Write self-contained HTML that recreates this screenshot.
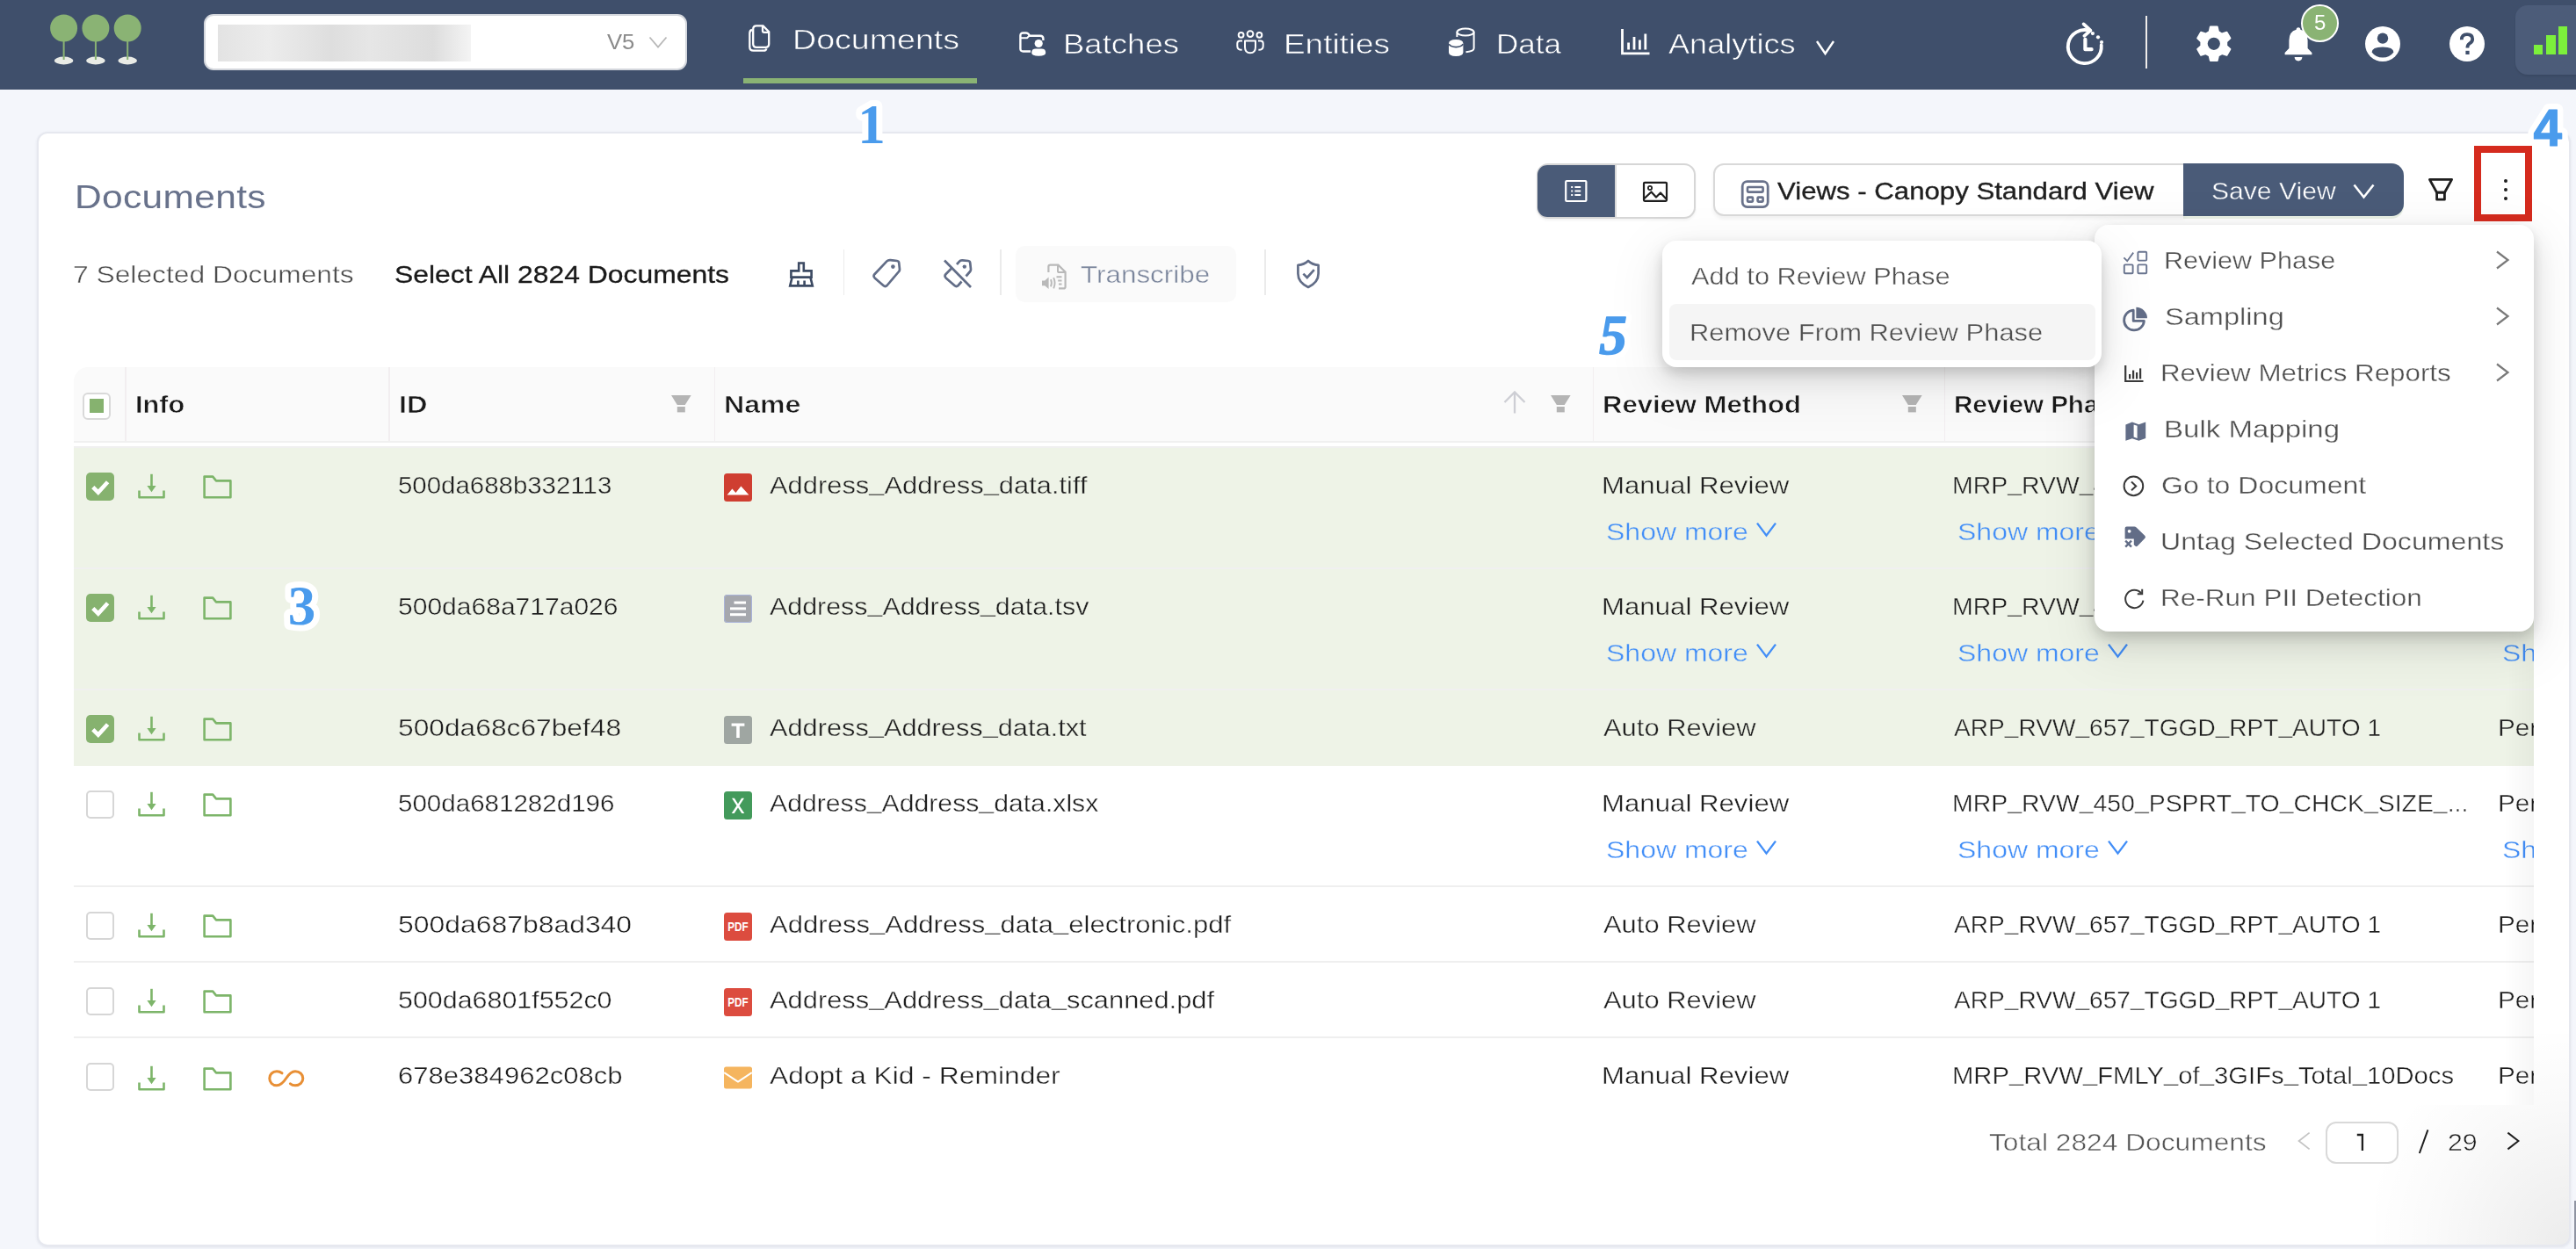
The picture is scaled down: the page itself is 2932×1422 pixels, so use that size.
<!DOCTYPE html>
<html><head><meta charset="utf-8"><title>Documents</title>
<style>
html,body{margin:0;padding:0;}
body{width:2932px;height:1422px;overflow:hidden;background:#f4f6fb;position:relative;font-family:"Liberation Sans",sans-serif;}
div,span,svg{position:absolute;}
span{white-space:nowrap;transform-origin:0 50%;will-change:transform;}
svg{overflow:visible;}
i{font-style:normal;position:relative;top:-0.152em;}
</style></head><body>
<div style="left:0px;top:0px;width:2932px;height:102px;background:#3f4f6b;"></div>
<svg style="left:0px;top:0px" width="200" height="102" viewBox="0 0 200 102"><ellipse cx="72.6" cy="69" rx="10.8" ry="4.4" fill="#e9ebe6"/><rect x="71.6" y="40" width="2" height="28" fill="#8ab374"/><circle cx="72.6" cy="32" r="15.5" fill="#8ab374"/><ellipse cx="108.9" cy="69" rx="10.8" ry="4.4" fill="#e9ebe6"/><rect x="107.9" y="40" width="2" height="28" fill="#8ab374"/><circle cx="108.9" cy="32" r="15.5" fill="#8ab374"/><ellipse cx="145.2" cy="69" rx="10.8" ry="4.4" fill="#e9ebe6"/><rect x="144.2" y="40" width="2" height="28" fill="#8ab374"/><circle cx="145.2" cy="32" r="15.5" fill="#8ab374"/></svg>
<div style="left:232px;top:16px;width:550px;height:64px;background:#fff;border:2px solid #d4d7dd;border-radius:11px;box-sizing:border-box;"></div>
<div style="left:248px;top:28px;width:288px;height:42px;background:linear-gradient(90deg,#e3e3e3 0%,#ececec 20%,#dedede 45%,#e6e6e6 60%,#dddddd 85%,#f4f4f4 100%);"></div>
<span style="left:691.00px;top:32.78px;font-size:24px;line-height:30px;color:#8a8a8a;transform:scaleX(1.0687);">V5</span>
<svg style="left:737px;top:40px;" width="24" height="16" viewBox="0 0 24 16"><path d="M2.5 2.5 L12 13.5 L21.5 2.5" fill="none" stroke="#b8b8b8" stroke-width="1.8"/></svg>
<svg style="left:852px;top:28px" width="26" height="32" viewBox="0 0 26 32"><path d="M4 6 Q1.3 6.5 1.3 10 V25.5 Q1.3 29.7 5.5 29.7 H17 Q20 29.7 20.3 27.3" fill="none" stroke="#fff" stroke-width="2.3"/><path d="M9 1.4 H16.5 L23.2 8.2 V22 Q23.2 25.8 19.4 25.8 H9 Q5.2 25.8 5.2 22 V5.2 Q5.2 1.4 9 1.4 Z" fill="none" stroke="#fff" stroke-width="2.3"/><path d="M16 1.8 V7 Q16 8.8 17.8 8.8 H23" fill="none" stroke="#fff" stroke-width="2.3"/></svg>
<span style="left:902.38px;top:25.07px;font-size:32px;line-height:40px;color:#fff;transform:scaleX(1.1744);-webkit-text-stroke:0.55px #3f4f6b;">Documents</span>
<div style="left:846px;top:89px;width:266px;height:6px;background:#8ab374;"></div>
<svg style="left:1160px;top:36px" width="32" height="30" viewBox="0 0 32 30"><path d="M13 22.5 H4.5 Q1.4 22.5 1.4 19.4 V4.6 Q1.4 1.5 4.5 1.5 H8 Q9.6 1.5 10.6 2.8 L12 4.7 H24 Q27.4 4.7 27.4 8 V10" fill="none" stroke="#fff" stroke-width="2.4"/><path d="M1.8 7.2 H9 L11.5 4.8" fill="none" stroke="#fff" stroke-width="2"/><circle cx="22.2" cy="13.5" r="4.6" fill="#fff"/><path d="M14.2 24 Q14.2 19.6 19 19.6 H25.4 Q30.2 19.6 30.2 24 Q30.2 27.8 22.2 27.8 Q14.2 27.8 14.2 24 Z" fill="#fff"/></svg>
<span style="left:1210.44px;top:30.37px;font-size:32px;line-height:40px;color:#fff;transform:scaleX(1.1414);-webkit-text-stroke:0.55px #3f4f6b;">Batches</span>
<svg style="left:1407px;top:34px" width="32" height="28" viewBox="0 0 32 28"><circle cx="5.6" cy="5.8" r="2.9" fill="none" stroke="#fff" stroke-width="2"/><circle cx="16" cy="4.6" r="3.4" fill="none" stroke="#fff" stroke-width="2"/><circle cx="26.4" cy="5.8" r="2.9" fill="none" stroke="#fff" stroke-width="2"/><path d="M10 12.4 H22 V19.5 Q22 26.3 16 26.3 Q10 26.3 10 19.5 Z" fill="none" stroke="#fff" stroke-width="2" stroke-linejoin="round"/><path d="M7 12.4 H4.4 Q1.3 12.4 1.3 15.6 V18.4 Q1.3 22.8 6.6 22.8" fill="none" stroke="#fff" stroke-width="2"/><path d="M25 12.4 H27.6 Q30.7 12.4 30.7 15.6 V18.4 Q30.7 22.8 25.4 22.8" fill="none" stroke="#fff" stroke-width="2"/></svg>
<span style="left:1461.42px;top:30.37px;font-size:32px;line-height:40px;color:#fff;transform:scaleX(1.1532);-webkit-text-stroke:0.55px #3f4f6b;">Entities</span>
<svg style="left:1648px;top:31px" width="32" height="34" viewBox="0 0 32 34"><ellipse cx="20" cy="5.6" rx="9.6" ry="4" fill="none" stroke="#fff" stroke-width="2"/><path d="M29.6 5.6 V24 Q29.6 27.4 20.5 28.2" fill="none" stroke="#fff" stroke-width="2"/><path d="M10.4 5.6 V11" fill="none" stroke="#fff" stroke-width="2"/><path d="M1 18.5 Q1 14 9.2 14 Q17.4 14 17.4 18.5 V28.6 Q17.4 33 9.2 33 Q1 33 1 28.6 Z" fill="#fff"/><path d="M1.2 19.2 Q3 22.6 9.2 22.6 Q15.4 22.6 17.2 19.2" fill="none" stroke="#3f4f6b" stroke-width="1.6"/></svg>
<span style="left:1702.53px;top:30.37px;font-size:32px;line-height:40px;color:#fff;transform:scaleX(1.0950);-webkit-text-stroke:0.55px #3f4f6b;">Data</span>
<svg style="left:1845px;top:33px" width="33" height="30" viewBox="0 0 33 30"><path d="M1.5 0 V27.8 H32.5" fill="none" stroke="#fff" stroke-width="2.8"/><rect x="7.2" y="15.5" width="2.8" height="8" fill="#fff"/><rect x="13.6" y="9" width="2.8" height="14.5" fill="#fff"/><rect x="20" y="12.5" width="2.8" height="11" fill="#fff"/><rect x="26.4" y="5.5" width="2.8" height="18" fill="#fff"/></svg>
<span style="left:1898.72px;top:30.37px;font-size:32px;line-height:40px;color:#fff;transform:scaleX(1.1299);-webkit-text-stroke:0.55px #3f4f6b;">Analytics</span>
<svg style="left:2064px;top:43px;" width="28" height="22" viewBox="0 0 28 22"><path d="M4 4 L13.5 18 L23 4" fill="none" stroke="#fff" stroke-width="2.4"/></svg>
<svg style="left:2350px;top:23px" width="48" height="54" viewBox="0 0 48 54"><path d="M28.99 12.14 A19 19 0 1 0 41.73 28.44" fill="none" stroke="#fff" stroke-width="3.8" stroke-linecap="round"/><path d="M21.6 4.4 L29.4 11.6 L22.4 17.8" fill="none" stroke="#fff" stroke-width="3.8" stroke-linecap="round" stroke-linejoin="round"/><circle cx="31.9" cy="15.1" r="2.1" fill="#fff"/><circle cx="38" cy="19.3" r="2.1" fill="#fff"/><circle cx="42" cy="25" r="2.1" fill="#fff"/><path d="M23.4 21.8 V33.2 H30.6" fill="none" stroke="#fff" stroke-width="4.2" stroke-linecap="round" stroke-linejoin="round"/></svg>
<div style="left:2441.8px;top:18px;width:2.1px;height:60px;background:#efecea;"></div>
<svg style="left:2498px;top:28.1px" width="44" height="44" viewBox="0 0 44 44"><path d="M16.66 8.14 L17.91 2.59 L25.69 2.59 L26.94 8.14 L31.06 10.51 L36.49 8.82 L40.38 15.57 L36.21 19.42 L36.21 24.18 L40.38 28.03 L36.49 34.78 L31.06 33.09 L26.94 35.46 L25.69 41.01 L17.91 41.01 L16.66 35.46 L12.54 33.09 L7.11 34.78 L3.22 28.03 L7.39 24.18 L7.39 19.42 L3.22 15.57 L7.11 8.82 L12.54 10.51Z" fill="#fff" stroke="#fff" stroke-width="2" stroke-linejoin="round"/><circle cx="21.8" cy="21.8" r="14.4" fill="#fff"/><circle cx="21.8" cy="21.8" r="7.1" fill="#3f4f6b"/></svg>
<svg style="left:2598px;top:30px" width="36" height="42" viewBox="0 0 36 42"><path d="M18 1.2 Q20.4 1.2 20.4 3.8 Q28.6 6 28.6 16 V25 L33.4 30 V32.2 H2.6 V30 L7.4 25 V16 Q7.4 6 15.6 3.8 Q15.6 1.2 18 1.2 Z" fill="#fff"/><path d="M13.6 35 H22.4 Q22 39.4 18 39.4 Q14 39.4 13.6 35 Z" fill="#fff"/></svg>
<div style="left:2618.5px;top:4.5px;width:43px;height:43px;background:#8ab374;border:2px solid #fff;border-radius:50%;box-sizing:border-box;"></div>
<span style="left:2634.00px;top:11.28px;font-size:24px;line-height:30px;color:#fff;">5</span>
<svg style="left:2692px;top:29.5px" width="40" height="40" viewBox="0 0 40 40"><circle cx="20" cy="20" r="20" fill="#fff"/><circle cx="20" cy="13.6" r="6.2" fill="#3f4f6b"/><path d="M7.6 29.4 Q7.6 23.4 20 23.4 Q32.4 23.4 32.4 29.4 Q28 35.4 20 35.4 Q12 35.4 7.6 29.4 Z" fill="#3f4f6b"/></svg>
<svg style="left:2787.5px;top:29.5px" width="40" height="40" viewBox="0 0 40 40"><circle cx="20" cy="20" r="20" fill="#fff"/><path d="M13.8 15.2 Q13.8 9.2 20 9.2 Q26.2 9.2 26.2 14.6 Q26.2 17.6 23 19.4 Q20.4 20.8 20.4 24.4" fill="none" stroke="#3f4f6b" stroke-width="3.8"/><rect x="18.4" y="27.8" width="4.2" height="4.2" fill="#3f4f6b"/></svg>
<div style="left:2863px;top:6px;width:69px;height:79px;background:#4c5c79;border-radius:14px 0 0 14px;box-shadow:0 2px 2px rgba(0,0,0,.08);"></div>
<div style="left:2883.5px;top:50.5px;width:10.5px;height:11.5px;background:#7cf03c;"></div>
<div style="left:2897.5px;top:40px;width:11px;height:22px;background:#7cf03c;"></div>
<div style="left:2911.5px;top:30px;width:10.5px;height:32px;background:#7cf03c;"></div>
<div style="left:42px;top:150px;width:2884.2px;height:1269px;background:#fff;border:2px solid #e6e8ef;border-radius:12px;box-sizing:border-box;box-shadow:0 1px 3px rgba(60,70,100,.10);"></div>
<div style="left:2704px;top:1177px;width:220px;height:240px;background:radial-gradient(ellipse at 100% 100%,rgba(0,0,0,.075),rgba(0,0,0,.02) 50%,rgba(0,0,0,0) 75%);border-radius:0 0 10px 0;"></div>
<div style="left:2930.3px;top:1367px;width:1.7px;height:55px;background:#8f94a2;"></div>
<span style="left:84.64px;top:202.41px;font-size:36px;line-height:45px;color:#68728b;letter-spacing:0.285px;transform:scaleX(1.1800);">Documents</span>
<div style="left:1748.6px;top:186px;width:181px;height:63.2px;background:#fff;border:2px solid #d6d6d6;border-radius:13px;box-sizing:border-box;box-shadow:0 2px 3px rgba(0,0,0,.05);"></div>
<div style="left:1750.4px;top:187.8px;width:87.8px;height:59.6px;background:#4a5b78;border-radius:11px 0 0 11px;"></div>
<div style="left:1838.2px;top:187.8px;width:1.8px;height:59.6px;background:#d9d9d9;"></div>
<svg style="left:1779px;top:203.4px" width="30" height="30" viewBox="0 0 30 30"><rect x="3.2" y="3" width="23.2" height="23" rx="1" fill="none" stroke="#fff" stroke-width="2.2"/><rect x="9.2" y="9" width="2" height="2" fill="#fff"/><rect x="13.4" y="9" width="6.8" height="2" fill="#fff"/><rect x="9.2" y="13.5" width="2" height="2" fill="#fff"/><rect x="13.4" y="13.5" width="6.8" height="2" fill="#fff"/><rect x="9.2" y="18" width="2" height="2" fill="#fff"/><rect x="13.4" y="18" width="6.8" height="2" fill="#fff"/></svg>
<svg style="left:1869px;top:204.5px" width="30" height="28" viewBox="0 0 30 28"><rect x="2" y="2.8" width="26" height="21" rx="1" fill="none" stroke="#1f1f1f" stroke-width="2.2"/><circle cx="9" cy="9" r="2.1" fill="none" stroke="#1f1f1f" stroke-width="1.8"/><path d="M2.5 21 L10.5 13.5 L16 19.5 L21 14.5 L27.5 21.5" fill="none" stroke="#1f1f1f" stroke-width="2.2" stroke-linejoin="round"/></svg>
<div style="left:1950px;top:186px;width:537px;height:60px;background:#fff;border:2px solid #d9d9d9;border-radius:12px 0 0 12px;box-sizing:border-box;box-shadow:0 3px 4px rgba(0,0,0,.06);"></div>
<svg style="left:1981px;top:205px" width="34" height="32" viewBox="0 0 34 32"><rect x="2.2" y="1.6" width="29" height="29" rx="5.5" fill="none" stroke="#69728b" stroke-width="2.8"/><rect x="8" y="8" width="17.6" height="5.6" rx="1" fill="none" stroke="#69728b" stroke-width="2.6"/><rect x="8" y="19.6" width="6" height="5" rx="0.8" fill="none" stroke="#69728b" stroke-width="2.6"/><rect x="19.6" y="19.6" width="6" height="5" rx="0.8" fill="none" stroke="#69728b" stroke-width="2.6"/></svg>
<span style="left:2022.50px;top:200.32px;font-size:28px;line-height:35px;color:#1f1f1f;transform:scaleX(1.1134);-webkit-text-stroke:0.35px #1f1f1f;">Views - Canopy Standard View</span>
<div style="left:2485px;top:186px;width:251px;height:60px;background:#4a5b78;border-radius:0 14px 14px 0;box-shadow:0 3px 0 rgba(138,179,116,.18);"></div>
<span style="left:2516.73px;top:199.82px;font-size:28px;line-height:35px;color:#fff;transform:scaleX(1.0748);-webkit-text-stroke:0.4px #4a5b78;">Save View</span>
<svg style="left:2676px;top:206px;" width="30" height="24" viewBox="0 0 30 24"><path d="M3.5 4.5 L14.5 18.5 L25.5 4.5" fill="none" stroke="#fff" stroke-width="2.6"/></svg>
<svg style="left:2763px;top:202px" width="30" height="28" viewBox="0 0 30 28"><path d="M2.4 2.4 H27.6 L19.4 17.2 H10.6 Z" fill="none" stroke="#1f1f1f" stroke-width="2.8" stroke-linejoin="round"/><rect x="10.6" y="17.2" width="8.8" height="8" fill="none" stroke="#1f1f1f" stroke-width="2.8" stroke-linejoin="round"/></svg>
<div style="left:2816px;top:166px;width:66px;height:86px;border:8px solid #d52b1e;box-sizing:border-box;"></div>
<div style="left:2850.1px;top:203.9px;width:3.8px;height:3.8px;background:#1f1f1f;border-radius:50%;"></div>
<div style="left:2850.1px;top:214px;width:3.8px;height:3.8px;background:#1f1f1f;border-radius:50%;"></div>
<div style="left:2850.1px;top:224.1px;width:3.8px;height:3.8px;background:#1f1f1f;border-radius:50%;"></div>
<span style="left:82.64px;top:295.32px;font-size:28px;line-height:35px;color:#4c4c4c;transform:scaleX(1.1349);-webkit-text-stroke:0.45px #fff;">7 Selected Documents</span>
<span style="left:449.36px;top:295.32px;font-size:28px;line-height:35px;color:#1a1a1a;transform:scaleX(1.1386);-webkit-text-stroke:0.3px #1a1a1a;">Select All 2824 Documents</span>
<svg style="left:897px;top:298px" width="30" height="30" viewBox="0 0 30 30"><path d="M12.2 1.5 H17.8 V10.4 H26.6 V17.6 H3.4 V10.4 H12.2 Z" fill="none" stroke="#3c4a63" stroke-width="2.6"/><path d="M4.6 17.6 L2.2 27.4 H27.8 L25.4 17.6" fill="none" stroke="#3c4a63" stroke-width="2.6"/><path d="M11.4 27 V21.5 M18.6 27 V21.5" stroke="#3c4a63" stroke-width="2.6"/></svg>
<div style="left:959.8px;top:284px;width:1.6px;height:52px;background:#ebebeb;"></div>
<svg style="left:992px;top:294px" width="34" height="35" viewBox="0 0 34 35"><path d="M21.5 2.2 L29 3 Q31 3.3 31.2 5.2 L32 12.6 Q32.1 14 31.2 15 L17.6 31 Q15.6 33 13.4 31 L3.6 22.4 Q1.6 20.4 3.4 18.2 L17.4 3.4 Q18.8 2 21.5 2.2 Z" fill="none" stroke="#626d87" stroke-width="2.7" stroke-linejoin="round"/><circle cx="24.4" cy="9.6" r="2.3" fill="#626d87"/></svg>
<svg style="left:1073px;top:294px" width="34" height="35" viewBox="0 0 34 35"><path d="M16 7 L19 3.6 Q20 2.2 22.5 2.4 L29 3 Q31 3.3 31.2 5.2 L32 12.6 Q32.1 14 31.2 15 L26.5 20.5 M21.5 26.5 L17.6 31 Q15.6 33 13.4 31 L3.6 22.4 Q1.6 20.4 3.4 18.2 L11 10.5" fill="none" stroke="#626d87" stroke-width="2.7" stroke-linejoin="round"/><circle cx="24.8" cy="9.6" r="2.2" fill="#626d87"/><path d="M2 2.5 L32 33" stroke="#626d87" stroke-width="2.7"/></svg>
<div style="left:1138.2px;top:284px;width:1.6px;height:52px;background:#ebebeb;"></div>
<div style="left:1156px;top:280px;width:251px;height:64px;background:#fafafa;border-radius:10px;"></div>
<svg style="left:1184px;top:291px" width="32" height="40" viewBox="0 0 32 40"><path d="M9.4 19 V12.6 Q9.4 10.6 11.4 10.6 H20.4 L28.6 18.6 V35.4 Q28.6 37.4 26.6 37.4 H21" fill="none" stroke="#b9b9b9" stroke-width="2.2"/><path d="M20 11 V17.4 Q20 19 21.6 19 H28.2" fill="none" stroke="#b9b9b9" stroke-width="2"/><path d="M18.5 24.2 H24.5 M20.2 28.4 H24.5 M21 32.6 H24.5" stroke="#b9b9b9" stroke-width="2"/><path d="M2 28.4 H5.2 L9.6 24.6 V38 L5.2 34.2 H2 Z" fill="#b9b9b9"/><path d="M12 27.2 Q13.8 31.3 12 35.4 M15.2 25.2 Q18 31.3 15.2 37.4" fill="none" stroke="#b9b9b9" stroke-width="1.9"/></svg>
<span style="left:1230.10px;top:295.12px;font-size:28px;line-height:35px;color:#7b869c;transform:scaleX(1.1213);-webkit-text-stroke:0.4px #fafafa;">Transcribe</span>
<div style="left:1439.4px;top:284px;width:1.6px;height:52px;background:#ebebeb;"></div>
<svg style="left:1474px;top:295px" width="30" height="34" viewBox="0 0 30 34"><path d="M15 1.9 Q19.5 6.2 26.6 6.8 V16.6 Q26.6 26.6 15 32 Q3.4 26.6 3.4 16.6 V6.8 Q10.5 6.2 15 1.9 Z" fill="none" stroke="#626d87" stroke-width="2.7" stroke-linejoin="round"/><path d="M9.4 16.6 L13.8 21 L21.8 12.2" fill="none" stroke="#626d87" stroke-width="2.7"/></svg>
<div style="left:84px;top:418px;width:2799.5px;height:840px;overflow:hidden;background:#fff;">
<div style="left:0px;top:0px;width:2799.5px;height:84px;background:#fafafa;border-radius:16px 0 0 0;"></div>
<div style="left:0px;top:84px;width:2799.5px;height:2px;background:#f0f0f0;"></div>
<div style="left:58px;top:0px;width:1.6px;height:84px;background:#f2eef0;"></div>
<div style="left:358px;top:0px;width:1.6px;height:84px;background:#f2eef0;"></div>
<div style="left:728.5px;top:0px;width:1.6px;height:84px;background:#f2eef0;"></div>
<div style="left:1728.5px;top:0px;width:1.6px;height:84px;background:#f2eef0;"></div>
<div style="left:2128.5px;top:0px;width:1.6px;height:84px;background:#f2eef0;"></div>
<div style="left:2749px;top:0px;width:1.6px;height:84px;background:#f2eef0;"></div>
<div style="left:10px;top:28.5px;width:32px;height:31px;background:#fff;border:2px solid #d9d9d9;border-radius:6px;box-sizing:border-box;"></div>
<div style="left:18px;top:36px;width:16px;height:16px;background:#86b26f;"></div>
<span style="left:69.91px;top:24.82px;font-size:28px;line-height:35px;color:#1a1a1a;transform:scaleX(1.0935);font-weight:700;-webkit-text-stroke:0.6px #fafafa;">Info</span>
<span style="left:369.54px;top:24.82px;font-size:28px;line-height:35px;color:#1a1a1a;transform:scaleX(1.1613);font-weight:700;-webkit-text-stroke:0.6px #fafafa;">ID</span>
<span style="left:739.55px;top:24.82px;font-size:28px;line-height:35px;color:#1a1a1a;transform:scaleX(1.1461);font-weight:700;-webkit-text-stroke:0.6px #fafafa;">Name</span>
<span style="left:1739.59px;top:24.82px;font-size:28px;line-height:35px;color:#1a1a1a;transform:scaleX(1.1086);font-weight:700;-webkit-text-stroke:0.6px #fafafa;">Review Method</span>
<span style="left:2139.64px;top:24.82px;font-size:28px;line-height:35px;color:#1a1a1a;transform:scaleX(1.0562);font-weight:700;-webkit-text-stroke:0.6px #fafafa;">Review Phase</span>
<svg style="left:680px;top:32px" width="23" height="20" viewBox="0 0 23 20"><path d="M0 0 H22.6 L15.8 11 H6.8 Z" fill="#b4b4b4"/><rect x="6.8" y="13" width="9" height="6.4" fill="#b4b4b4"/></svg>
<svg style="left:1681px;top:32px" width="23" height="20" viewBox="0 0 23 20"><path d="M0 0 H22.6 L15.8 11 H6.8 Z" fill="#b4b4b4"/><rect x="6.8" y="13" width="9" height="6.4" fill="#b4b4b4"/></svg>
<svg style="left:2081px;top:32px" width="23" height="20" viewBox="0 0 23 20"><path d="M0 0 H22.6 L15.8 11 H6.8 Z" fill="#b4b4b4"/><rect x="6.8" y="13" width="9" height="6.4" fill="#b4b4b4"/></svg>
<svg style="left:1627px;top:27px" width="26" height="26" viewBox="0 0 26 26"><path d="M13 25.5 V2 M1.5 13 L13 1.5 L24.5 13" fill="none" stroke="#cdced4" stroke-width="2.3"/></svg>
<div style="left:0px;top:90px;width:2799.5px;height:138px;background:#eef3e7;"></div>
<div style="left:14px;top:120px;width:32px;height:32px;background:#86b26f;border-radius:5px;"><svg style="left:0;top:0" width="32" height="32" viewBox="0 0 32 32"><path d="M7.8 16.6 L13.8 22.6 L24.6 10.8" fill="none" stroke="#fff" stroke-width="4.6"/></svg></div>
<svg style="left:72.6px;top:121.2px" width="31" height="30" viewBox="0 0 31 30"><path d="M15.5 0.8 V18" stroke="#7db56a" stroke-width="2.6"/><path d="M10.4 14 H20.6 L15.5 21.2 Z" fill="#7db56a"/><path d="M1.5 19.4 V27.3 H29.5 V19.4" fill="none" stroke="#7db56a" stroke-width="2.6" stroke-linejoin="round"/></svg>
<svg style="left:147.4px;top:122.6px" width="34" height="27" viewBox="0 0 34 27"><path d="M1.6 1.6 H11.2 L15 6.4 H31.4 V25.2 H1.6 Z" fill="none" stroke="#7db56a" stroke-width="2.6" stroke-linejoin="round"/></svg>
<span style="left:369.35px;top:116.52px;font-size:28px;line-height:35px;color:#1f1f1f;transform:scaleX(1.0507);-webkit-text-stroke:0.4px #eef3e7;">500da688b332113</span>
<svg style="left:740px;top:120.8px" width="32" height="32" viewBox="0 0 32 32"><rect x="0" y="0" width="32" height="32" rx="3.5" fill="#cf3e31"/><path d="M3.6 24.6 L9.4 17.4 L13.4 22 L19.4 14.6 L28.4 24.6 Z" fill="#fff"/></svg>
<span style="left:791.90px;top:116.52px;font-size:28px;line-height:35px;color:#1f1f1f;transform:scaleX(1.1026);-webkit-text-stroke:0.4px #eef3e7;">Address<i>_</i>Address<i>_</i>data.tiff</span>
<span style="left:1739.37px;top:116.52px;font-size:28px;line-height:35px;color:#1f1f1f;transform:scaleX(1.1141);-webkit-text-stroke:0.4px #eef3e7;">Manual Review</span>
<span style="left:2138.27px;top:116.52px;font-size:28px;line-height:35px;color:#1f1f1f;transform:scaleX(1.0144);-webkit-text-stroke:0.4px #eef3e7;">MRP<i>_</i>RVW<i>_</i>450<i>_</i>PSPRT<i>_</i>TO<i>_</i>CHCK<i>_</i>SIZE<i>_</i>...</span>
<span style="left:2758.98px;top:116.52px;font-size:28px;line-height:35px;color:#1f1f1f;transform:scaleX(1.0596);-webkit-text-stroke:0.4px #eef3e7;">Pending</span>
<span style="left:1743.86px;top:169.52px;font-size:28px;line-height:35px;color:#428ef7;transform:scaleX(1.1425);-webkit-text-stroke:0.4px #eef3e7;">Show more</span>
<svg style="left:1914.4px;top:174.2px" width="26" height="22" viewBox="0 0 26 22"><path d="M2 3.6 L12.5 17.6 L23 3.6" fill="none" stroke="#428ef7" stroke-width="2.4"/></svg>
<span style="left:2143.86px;top:169.52px;font-size:28px;line-height:35px;color:#428ef7;transform:scaleX(1.1425);-webkit-text-stroke:0.4px #eef3e7;">Show more</span>
<svg style="left:2314.4px;top:174.2px" width="26" height="22" viewBox="0 0 26 22"><path d="M2 3.6 L12.5 17.6 L23 3.6" fill="none" stroke="#428ef7" stroke-width="2.4"/></svg>
<span style="left:2764.36px;top:169.52px;font-size:28px;line-height:35px;color:#428ef7;transform:scaleX(1.1425);-webkit-text-stroke:0.4px #eef3e7;">Show more</span>
<svg style="left:2934.9px;top:174.2px" width="26" height="22" viewBox="0 0 26 22"><path d="M2 3.6 L12.5 17.6 L23 3.6" fill="none" stroke="#428ef7" stroke-width="2.4"/></svg>
<div style="left:0px;top:228px;width:2799.5px;height:138.5px;background:#eef3e7;"></div>
<div style="left:14px;top:258px;width:32px;height:32px;background:#86b26f;border-radius:5px;"><svg style="left:0;top:0" width="32" height="32" viewBox="0 0 32 32"><path d="M7.8 16.6 L13.8 22.6 L24.6 10.8" fill="none" stroke="#fff" stroke-width="4.6"/></svg></div>
<svg style="left:72.6px;top:259.2px" width="31" height="30" viewBox="0 0 31 30"><path d="M15.5 0.8 V18" stroke="#7db56a" stroke-width="2.6"/><path d="M10.4 14 H20.6 L15.5 21.2 Z" fill="#7db56a"/><path d="M1.5 19.4 V27.3 H29.5 V19.4" fill="none" stroke="#7db56a" stroke-width="2.6" stroke-linejoin="round"/></svg>
<svg style="left:147.4px;top:260.6px" width="34" height="27" viewBox="0 0 34 27"><path d="M1.6 1.6 H11.2 L15 6.4 H31.4 V25.2 H1.6 Z" fill="none" stroke="#7db56a" stroke-width="2.6" stroke-linejoin="round"/></svg>
<span style="left:369.33px;top:254.52px;font-size:28px;line-height:35px;color:#1f1f1f;transform:scaleX(1.0724);-webkit-text-stroke:0.4px #eef3e7;">500da68a717a026</span>
<svg style="left:740px;top:258.8px" width="32" height="32" viewBox="0 0 32 32"><rect x="0" y="0" width="32" height="32" rx="3.5" fill="#a5a7ad"/><rect x="0.5" y="0.5" width="31" height="31" rx="3.5" fill="none" stroke="#a9b6e6" stroke-width="0.8"/><rect x="11.5" y="7.6" width="13.5" height="3" fill="#fff"/><rect x="7" y="14.4" width="18" height="3" fill="#fff"/><rect x="7" y="21.2" width="18" height="3" fill="#fff"/></svg>
<span style="left:791.90px;top:254.52px;font-size:28px;line-height:35px;color:#1f1f1f;transform:scaleX(1.0857);-webkit-text-stroke:0.4px #eef3e7;">Address<i>_</i>Address<i>_</i>data.tsv</span>
<span style="left:1739.37px;top:254.52px;font-size:28px;line-height:35px;color:#1f1f1f;transform:scaleX(1.1141);-webkit-text-stroke:0.4px #eef3e7;">Manual Review</span>
<span style="left:2138.27px;top:254.52px;font-size:28px;line-height:35px;color:#1f1f1f;transform:scaleX(1.0144);-webkit-text-stroke:0.4px #eef3e7;">MRP<i>_</i>RVW<i>_</i>450<i>_</i>PSPRT<i>_</i>TO<i>_</i>CHCK<i>_</i>SIZE<i>_</i>...</span>
<span style="left:2758.98px;top:254.52px;font-size:28px;line-height:35px;color:#1f1f1f;transform:scaleX(1.0596);-webkit-text-stroke:0.4px #eef3e7;">Pending</span>
<span style="left:1743.86px;top:307.52px;font-size:28px;line-height:35px;color:#428ef7;transform:scaleX(1.1425);-webkit-text-stroke:0.4px #eef3e7;">Show more</span>
<svg style="left:1914.4px;top:312.2px" width="26" height="22" viewBox="0 0 26 22"><path d="M2 3.6 L12.5 17.6 L23 3.6" fill="none" stroke="#428ef7" stroke-width="2.4"/></svg>
<span style="left:2143.86px;top:307.52px;font-size:28px;line-height:35px;color:#428ef7;transform:scaleX(1.1425);-webkit-text-stroke:0.4px #eef3e7;">Show more</span>
<svg style="left:2314.4px;top:312.2px" width="26" height="22" viewBox="0 0 26 22"><path d="M2 3.6 L12.5 17.6 L23 3.6" fill="none" stroke="#428ef7" stroke-width="2.4"/></svg>
<span style="left:2764.36px;top:307.52px;font-size:28px;line-height:35px;color:#428ef7;transform:scaleX(1.1425);-webkit-text-stroke:0.4px #eef3e7;">Show more</span>
<svg style="left:2934.9px;top:312.2px" width="26" height="22" viewBox="0 0 26 22"><path d="M2 3.6 L12.5 17.6 L23 3.6" fill="none" stroke="#428ef7" stroke-width="2.4"/></svg>
<div style="left:0px;top:366.5px;width:2799.5px;height:87px;background:#eef3e7;"></div>
<div style="left:14px;top:396px;width:32px;height:32px;background:#86b26f;border-radius:5px;"><svg style="left:0;top:0" width="32" height="32" viewBox="0 0 32 32"><path d="M7.8 16.6 L13.8 22.6 L24.6 10.8" fill="none" stroke="#fff" stroke-width="4.6"/></svg></div>
<svg style="left:72.6px;top:397.2px" width="31" height="30" viewBox="0 0 31 30"><path d="M15.5 0.8 V18" stroke="#7db56a" stroke-width="2.6"/><path d="M10.4 14 H20.6 L15.5 21.2 Z" fill="#7db56a"/><path d="M1.5 19.4 V27.3 H29.5 V19.4" fill="none" stroke="#7db56a" stroke-width="2.6" stroke-linejoin="round"/></svg>
<svg style="left:147.4px;top:398.6px" width="34" height="27" viewBox="0 0 34 27"><path d="M1.6 1.6 H11.2 L15 6.4 H31.4 V25.2 H1.6 Z" fill="none" stroke="#7db56a" stroke-width="2.6" stroke-linejoin="round"/></svg>
<span style="left:369.27px;top:392.52px;font-size:28px;line-height:35px;color:#1f1f1f;transform:scaleX(1.1332);-webkit-text-stroke:0.4px #eef3e7;">500da68c67bef48</span>
<svg style="left:740px;top:396.8px" width="32" height="32" viewBox="0 0 32 32"><rect x="0" y="0" width="32" height="32" rx="3.5" fill="#9fa6a2"/><path d="M8.6 8.4 H23.4 V11.8 H17.8 V25 H14.2 V11.8 H8.6 Z" fill="#fff"/></svg>
<span style="left:791.90px;top:392.52px;font-size:28px;line-height:35px;color:#1f1f1f;transform:scaleX(1.0979);-webkit-text-stroke:0.4px #eef3e7;">Address<i>_</i>Address<i>_</i>data.txt</span>
<span style="left:1740.80px;top:392.52px;font-size:28px;line-height:35px;color:#1f1f1f;transform:scaleX(1.1040);-webkit-text-stroke:0.4px #eef3e7;">Auto Review</span>
<span style="left:2140.30px;top:392.52px;font-size:28px;line-height:35px;color:#1f1f1f;transform:scaleX(1.0031);-webkit-text-stroke:0.4px #eef3e7;">ARP<i>_</i>RVW<i>_</i>657<i>_</i>TGGD<i>_</i>RPT<i>_</i>AUTO 1</span>
<span style="left:2758.98px;top:392.52px;font-size:28px;line-height:35px;color:#1f1f1f;transform:scaleX(1.0596);-webkit-text-stroke:0.4px #eef3e7;">Pending</span>
<div style="left:0px;top:589.7px;width:2799.5px;height:2px;background:#efefef;"></div>
<div style="left:14px;top:482px;width:32px;height:31.6px;background:#fff;border:2px solid #d6d6d6;border-radius:5px;box-sizing:border-box;"></div>
<svg style="left:72.6px;top:483.2px" width="31" height="30" viewBox="0 0 31 30"><path d="M15.5 0.8 V18" stroke="#7db56a" stroke-width="2.6"/><path d="M10.4 14 H20.6 L15.5 21.2 Z" fill="#7db56a"/><path d="M1.5 19.4 V27.3 H29.5 V19.4" fill="none" stroke="#7db56a" stroke-width="2.6" stroke-linejoin="round"/></svg>
<svg style="left:147.4px;top:484.6px" width="34" height="27" viewBox="0 0 34 27"><path d="M1.6 1.6 H11.2 L15 6.4 H31.4 V25.2 H1.6 Z" fill="none" stroke="#7db56a" stroke-width="2.6" stroke-linejoin="round"/></svg>
<span style="left:369.34px;top:478.52px;font-size:28px;line-height:35px;color:#1f1f1f;transform:scaleX(1.0551);-webkit-text-stroke:0.4px #fff;">500da681282d196</span>
<svg style="left:740px;top:482.8px" width="32" height="32" viewBox="0 0 32 32"><rect x="0" y="0" width="32" height="32" rx="3.5" fill="#439a5b"/><path d="M9 7.8 H11.9 L16 14.3 L20.1 7.8 H23 L17.5 16.3 L23.3 25 H20.3 L16 18.4 L11.7 25 H8.7 L14.5 16.3 Z" fill="#fff"/></svg>
<span style="left:791.90px;top:478.52px;font-size:28px;line-height:35px;color:#1f1f1f;transform:scaleX(1.0784);-webkit-text-stroke:0.4px #fff;">Address<i>_</i>Address<i>_</i>data.xlsx</span>
<span style="left:1739.37px;top:478.52px;font-size:28px;line-height:35px;color:#1f1f1f;transform:scaleX(1.1141);-webkit-text-stroke:0.4px #fff;">Manual Review</span>
<span style="left:2138.27px;top:478.52px;font-size:28px;line-height:35px;color:#1f1f1f;transform:scaleX(1.0144);-webkit-text-stroke:0.4px #fff;">MRP<i>_</i>RVW<i>_</i>450<i>_</i>PSPRT<i>_</i>TO<i>_</i>CHCK<i>_</i>SIZE<i>_</i>...</span>
<span style="left:2758.98px;top:478.52px;font-size:28px;line-height:35px;color:#1f1f1f;transform:scaleX(1.0596);-webkit-text-stroke:0.4px #fff;">Pending</span>
<span style="left:1743.86px;top:531.52px;font-size:28px;line-height:35px;color:#428ef7;transform:scaleX(1.1425);-webkit-text-stroke:0.4px #fff;">Show more</span>
<svg style="left:1914.4px;top:536.2px" width="26" height="22" viewBox="0 0 26 22"><path d="M2 3.6 L12.5 17.6 L23 3.6" fill="none" stroke="#428ef7" stroke-width="2.4"/></svg>
<span style="left:2143.86px;top:531.52px;font-size:28px;line-height:35px;color:#428ef7;transform:scaleX(1.1425);-webkit-text-stroke:0.4px #fff;">Show more</span>
<svg style="left:2314.4px;top:536.2px" width="26" height="22" viewBox="0 0 26 22"><path d="M2 3.6 L12.5 17.6 L23 3.6" fill="none" stroke="#428ef7" stroke-width="2.4"/></svg>
<span style="left:2764.36px;top:531.52px;font-size:28px;line-height:35px;color:#428ef7;transform:scaleX(1.1425);-webkit-text-stroke:0.4px #fff;">Show more</span>
<svg style="left:2934.9px;top:536.2px" width="26" height="22" viewBox="0 0 26 22"><path d="M2 3.6 L12.5 17.6 L23 3.6" fill="none" stroke="#428ef7" stroke-width="2.4"/></svg>
<div style="left:0px;top:675.7px;width:2799.5px;height:2px;background:#efefef;"></div>
<div style="left:14px;top:620px;width:32px;height:31.6px;background:#fff;border:2px solid #d6d6d6;border-radius:5px;box-sizing:border-box;"></div>
<svg style="left:72.6px;top:621.2px" width="31" height="30" viewBox="0 0 31 30"><path d="M15.5 0.8 V18" stroke="#7db56a" stroke-width="2.6"/><path d="M10.4 14 H20.6 L15.5 21.2 Z" fill="#7db56a"/><path d="M1.5 19.4 V27.3 H29.5 V19.4" fill="none" stroke="#7db56a" stroke-width="2.6" stroke-linejoin="round"/></svg>
<svg style="left:147.4px;top:622.6px" width="34" height="27" viewBox="0 0 34 27"><path d="M1.6 1.6 H11.2 L15 6.4 H31.4 V25.2 H1.6 Z" fill="none" stroke="#7db56a" stroke-width="2.6" stroke-linejoin="round"/></svg>
<span style="left:369.26px;top:616.52px;font-size:28px;line-height:35px;color:#1f1f1f;transform:scaleX(1.1392);-webkit-text-stroke:0.4px #fff;">500da687b8ad340</span>
<svg style="left:740px;top:620.8px" width="32" height="32" viewBox="0 0 32 32"><rect x="0" y="0" width="32" height="32" rx="3.5" fill="#dc4c3f"/><text x="16" y="21.3" font-family="Liberation Sans" font-weight="700" font-size="14.6" fill="#fff" text-anchor="middle" textLength="23.4" lengthAdjust="spacingAndGlyphs">PDF</text></svg>
<span style="left:791.90px;top:616.52px;font-size:28px;line-height:35px;color:#1f1f1f;transform:scaleX(1.1096);-webkit-text-stroke:0.4px #fff;">Address<i>_</i>Address<i>_</i>data<i>_</i>electronic.pdf</span>
<span style="left:1740.80px;top:616.52px;font-size:28px;line-height:35px;color:#1f1f1f;transform:scaleX(1.1040);-webkit-text-stroke:0.4px #fff;">Auto Review</span>
<span style="left:2140.30px;top:616.52px;font-size:28px;line-height:35px;color:#1f1f1f;transform:scaleX(1.0031);-webkit-text-stroke:0.4px #fff;">ARP<i>_</i>RVW<i>_</i>657<i>_</i>TGGD<i>_</i>RPT<i>_</i>AUTO 1</span>
<span style="left:2758.98px;top:616.52px;font-size:28px;line-height:35px;color:#1f1f1f;transform:scaleX(1.0596);-webkit-text-stroke:0.4px #fff;">Pending</span>
<div style="left:0px;top:761.7px;width:2799.5px;height:2px;background:#efefef;"></div>
<div style="left:14px;top:706px;width:32px;height:31.6px;background:#fff;border:2px solid #d6d6d6;border-radius:5px;box-sizing:border-box;"></div>
<svg style="left:72.6px;top:707.2px" width="31" height="30" viewBox="0 0 31 30"><path d="M15.5 0.8 V18" stroke="#7db56a" stroke-width="2.6"/><path d="M10.4 14 H20.6 L15.5 21.2 Z" fill="#7db56a"/><path d="M1.5 19.4 V27.3 H29.5 V19.4" fill="none" stroke="#7db56a" stroke-width="2.6" stroke-linejoin="round"/></svg>
<svg style="left:147.4px;top:708.6px" width="34" height="27" viewBox="0 0 34 27"><path d="M1.6 1.6 H11.2 L15 6.4 H31.4 V25.2 H1.6 Z" fill="none" stroke="#7db56a" stroke-width="2.6" stroke-linejoin="round"/></svg>
<span style="left:369.31px;top:702.52px;font-size:28px;line-height:35px;color:#1f1f1f;transform:scaleX(1.0860);-webkit-text-stroke:0.4px #fff;">500da6801f552c0</span>
<svg style="left:740px;top:706.8px" width="32" height="32" viewBox="0 0 32 32"><rect x="0" y="0" width="32" height="32" rx="3.5" fill="#dc4c3f"/><text x="16" y="21.3" font-family="Liberation Sans" font-weight="700" font-size="14.6" fill="#fff" text-anchor="middle" textLength="23.4" lengthAdjust="spacingAndGlyphs">PDF</text></svg>
<span style="left:791.90px;top:702.52px;font-size:28px;line-height:35px;color:#1f1f1f;transform:scaleX(1.1020);-webkit-text-stroke:0.4px #fff;">Address<i>_</i>Address<i>_</i>data<i>_</i>scanned.pdf</span>
<span style="left:1740.80px;top:702.52px;font-size:28px;line-height:35px;color:#1f1f1f;transform:scaleX(1.1040);-webkit-text-stroke:0.4px #fff;">Auto Review</span>
<span style="left:2140.30px;top:702.52px;font-size:28px;line-height:35px;color:#1f1f1f;transform:scaleX(1.0031);-webkit-text-stroke:0.4px #fff;">ARP<i>_</i>RVW<i>_</i>657<i>_</i>TGGD<i>_</i>RPT<i>_</i>AUTO 1</span>
<span style="left:2758.98px;top:702.52px;font-size:28px;line-height:35px;color:#1f1f1f;transform:scaleX(1.0596);-webkit-text-stroke:0.4px #fff;">Pending</span>
<div style="left:14px;top:792px;width:32px;height:31.6px;background:#fff;border:2px solid #d6d6d6;border-radius:5px;box-sizing:border-box;"></div>
<svg style="left:72.6px;top:795.2px" width="31" height="30" viewBox="0 0 31 30"><path d="M15.5 0.8 V18" stroke="#7db56a" stroke-width="2.6"/><path d="M10.4 14 H20.6 L15.5 21.2 Z" fill="#7db56a"/><path d="M1.5 19.4 V27.3 H29.5 V19.4" fill="none" stroke="#7db56a" stroke-width="2.6" stroke-linejoin="round"/></svg>
<svg style="left:147.4px;top:796.6px" width="34" height="27" viewBox="0 0 34 27"><path d="M1.6 1.6 H11.2 L15 6.4 H31.4 V25.2 H1.6 Z" fill="none" stroke="#7db56a" stroke-width="2.6" stroke-linejoin="round"/></svg>
<svg style="left:221px;top:800px" width="42" height="20" viewBox="0 0 42 20"><path d="M16 3.8 C14 2.3 12 1.8 10 1.8 C5 1.8 1.8 5.4 1.8 9.8 C1.8 14.2 5 17.8 10 17.8 C14.6 17.8 17.6 14.4 20.6 9.8 C23.6 5.2 26.4 1.8 31 1.8 C36.4 1.8 39.8 5.4 39.8 9.8 C39.8 14.2 36.4 17.8 31 17.8 C29 17.8 27 17.2 25.4 15.8" fill="none" stroke="#e88f35" stroke-width="3" stroke-linecap="round"/></svg>
<span style="left:369.29px;top:788.52px;font-size:28px;line-height:35px;color:#1f1f1f;transform:scaleX(1.1089);-webkit-text-stroke:0.4px #fff;">678e384962c08cb</span>
<svg style="left:740px;top:795.8px" width="32" height="26" viewBox="0 0 32 26"><rect x="0" y="0.6" width="32" height="25" rx="2.5" fill="#f5b55f"/><path d="M0.2 7.2 L16 17.6 L31.8 7.2" fill="none" stroke="#fff" stroke-width="2" stroke-linejoin="round"/></svg>
<span style="left:791.90px;top:788.52px;font-size:28px;line-height:35px;color:#1f1f1f;transform:scaleX(1.1362);-webkit-text-stroke:0.4px #fff;">Adopt a Kid - Reminder</span>
<span style="left:1739.37px;top:788.52px;font-size:28px;line-height:35px;color:#1f1f1f;transform:scaleX(1.1141);-webkit-text-stroke:0.4px #fff;">Manual Review</span>
<span style="left:2138.21px;top:788.52px;font-size:28px;line-height:35px;color:#1f1f1f;transform:scaleX(1.0444);-webkit-text-stroke:0.4px #fff;">MRP<i>_</i>RVW<i>_</i>FMLY<i>_</i>of<i>_</i>3GIFs<i>_</i>Total<i>_</i>10Docs</span>
<span style="left:2758.98px;top:788.52px;font-size:28px;line-height:35px;color:#1f1f1f;transform:scaleX(1.0596);-webkit-text-stroke:0.4px #fff;">Pending</span>
<div style="left:0px;top:90px;width:2799.5px;height:2px;background:#f0f0f0;"></div>
<div style="left:0px;top:228px;width:2799.5px;height:2px;background:#f0f0f0;"></div>
<div style="left:0px;top:366.3px;width:2799.5px;height:2px;background:#f0f0f0;"></div>
<div style="left:2766px;top:90px;width:33.5px;height:750px;background:linear-gradient(90deg,rgba(0,0,0,0),rgba(0,0,0,.035));"></div>
</div>
<svg style="left:0;top:0;pointer-events:none" width="2932" height="1422" viewBox="0 0 2932 1422"><text x="327.8" y="711.0" font-family="Liberation Serif" font-weight="700" font-size="63" style="" fill="#fff" stroke="#fff" stroke-width="14" stroke-linejoin="round">3</text><text x="327.8" y="711.0" font-family="Liberation Serif" font-weight="700" font-size="63" style="" fill="#4a9bec">3</text></svg>
<span style="left:2263.75px;top:1282.82px;font-size:28px;line-height:35px;color:#555;transform:scaleX(1.1329);-webkit-text-stroke:0.5px #fff;">Total 2824 Documents</span>
<svg style="left:2612px;top:1287px;" width="20" height="24" viewBox="0 0 20 24"><path d="M16.6 2.6 L4.6 12 L16.6 21.4" fill="none" stroke="#c4c4c4" stroke-width="1.8"/></svg>
<div style="left:2647px;top:1277px;width:82.6px;height:47.5px;background:#fff;border:2px solid #d9d9d9;border-radius:12px;box-sizing:border-box;"></div>
<svg style="left:2680px;top:1288px;" width="14" height="24" viewBox="0 0 14 24"><path d="M2.8 4 H8.9 V22" fill="none" stroke="#1f1f1f" stroke-width="2.3"/></svg>
<svg style="left:2750px;top:1284px;" width="18" height="32" viewBox="0 0 18 32"><path d="M13.4 2.4 L3.8 29" fill="none" stroke="#1f1f1f" stroke-width="2"/></svg>
<span style="left:2786.17px;top:1282.82px;font-size:28px;line-height:35px;color:#1f1f1f;transform:scaleX(1.0821);-webkit-text-stroke:0.5px #fff;">29</span>
<svg style="left:2851px;top:1287px;" width="20" height="24" viewBox="0 0 20 24"><path d="M3.4 2.6 L15.4 12 L3.4 21.4" fill="none" stroke="#1f1f1f" stroke-width="2"/></svg>
<div style="left:2384px;top:256px;width:500px;height:463px;background:#fff;border-radius:16px;box-shadow:0 12px 32px rgba(0,0,0,.12),0 6px 14px rgba(0,0,0,.12),0 18px 56px 16px rgba(0,0,0,.05);"></div>
<svg style="left:2416px;top:285px" width="29" height="28" viewBox="0 0 29 28"><path d="M1.4 8.4 L5.2 12.2 L12.2 2.6" fill="none" stroke="#6a7590" stroke-width="1.8"/><rect x="17.4" y="1.8" width="9.8" height="9.8" rx="1" fill="none" stroke="#6a7590" stroke-width="1.9"/><rect x="1.8" y="16.4" width="9.8" height="9.8" rx="1" fill="none" stroke="#6a7590" stroke-width="1.9"/><rect x="17.4" y="16.4" width="9.8" height="9.8" rx="1" fill="none" stroke="#6a7590" stroke-width="1.9"/></svg>
<span style="left:2463.14px;top:278.82px;font-size:28px;line-height:35px;color:#4f4f4f;transform:scaleX(1.0904);-webkit-text-stroke:0.35px #fff;">Review Phase</span>
<svg style="left:2838px;top:283px;" width="20" height="26" viewBox="0 0 20 26"><path d="M4 3.5 L16.5 13 L4 22.5" fill="none" stroke="#7a7a7a" stroke-width="2.2"/></svg>
<svg style="left:2416px;top:348.5px" width="29" height="28" viewBox="0 0 29 28"><path d="M12.2 4.2 A11.4 11.4 0 1 0 24.4 16.4 H12.2 Z" fill="none" stroke="#626d87" stroke-width="2.8" stroke-linejoin="round"/><path d="M15.4 0.8 A12.6 12.6 0 0 1 28 13.2 H15.4 Z" fill="#626d87"/></svg>
<span style="left:2464.16px;top:342.82px;font-size:28px;line-height:35px;color:#4f4f4f;transform:scaleX(1.1637);-webkit-text-stroke:0.35px #fff;">Sampling</span>
<svg style="left:2838px;top:347px;" width="20" height="26" viewBox="0 0 20 26"><path d="M4 3.5 L16.5 13 L4 22.5" fill="none" stroke="#7a7a7a" stroke-width="2.2"/></svg>
<svg style="left:2417.5px;top:415.5px" width="22" height="20" viewBox="0 0 22 20"><path d="M1.2 0 V18 H21.5" fill="none" stroke="#3a3a3a" stroke-width="2.2"/><rect x="5" y="10" width="2.2" height="5.4" fill="#3a3a3a"/><rect x="9" y="5.6" width="2.2" height="9.8" fill="#3a3a3a"/><rect x="13" y="8" width="2.2" height="7.4" fill="#3a3a3a"/><rect x="17" y="3.4" width="2.2" height="12" fill="#3a3a3a"/></svg>
<span style="left:2459.09px;top:406.82px;font-size:28px;line-height:35px;color:#4f4f4f;transform:scaleX(1.1187);-webkit-text-stroke:0.35px #fff;">Review Metrics Reports</span>
<svg style="left:2838px;top:411px;" width="20" height="26" viewBox="0 0 20 26"><path d="M4 3.5 L16.5 13 L4 22.5" fill="none" stroke="#7a7a7a" stroke-width="2.2"/></svg>
<svg style="left:2418.5px;top:479.5px" width="24" height="23" viewBox="0 0 24 23"><path d="M0.4 3.4 L7.8 0.6 L15.4 3.2 L23.2 0.6 V19 L15.4 21.8 L7.8 19.2 L0.4 21.8 Z" fill="#626d87"/><path d="M9.6 3.4 L13.6 4.8 V19 L9.6 17.6 Z" fill="#fff"/></svg>
<span style="left:2462.97px;top:470.82px;font-size:28px;line-height:35px;color:#4f4f4f;transform:scaleX(1.1792);-webkit-text-stroke:0.35px #fff;">Bulk Mapping</span>
<svg style="left:2415.5px;top:540.5px" width="25" height="25" viewBox="0 0 25 25"><circle cx="12.4" cy="12.4" r="10.8" fill="none" stroke="#3a3a3a" stroke-width="2"/><path d="M10 7.6 L15.2 12.4 L10 17.2" fill="none" stroke="#3a3a3a" stroke-width="2"/></svg>
<span style="left:2460.18px;top:534.82px;font-size:28px;line-height:35px;color:#4f4f4f;transform:scaleX(1.1440);-webkit-text-stroke:0.35px #fff;">Go to Document</span>
<svg style="left:2417.5px;top:599px" width="25" height="25" viewBox="0 0 25 25"><path d="M0.6 2.6 Q0.6 0.6 2.6 0.6 H11.4 Q12.6 0.6 13.6 1.6 L23.4 11 Q24.6 12.4 23.4 13.8 L15 22.6 Q13.6 23.8 12.2 22.6 L10.8 21.2 V14.4 H0.6 Z" fill="#626d87"/><circle cx="5.6" cy="5.8" r="1.9" fill="#fff"/><path d="M1.2 16.6 L8 23.6 M8 16.6 L1.2 23.6" stroke="#626d87" stroke-width="2.4"/></svg>
<span style="left:2459.03px;top:598.82px;font-size:28px;line-height:35px;color:#4f4f4f;transform:scaleX(1.1480);-webkit-text-stroke:0.35px #fff;">Untag Selected Documents</span>
<svg style="left:2416.5px;top:669px" width="25" height="25" viewBox="0 0 25 25"><path d="M20.2 6.4 A10.2 10.2 0 1 0 22.4 14.6" fill="none" stroke="#3a3a3a" stroke-width="2"/><path d="M21.2 1.8 V7.2 H15.8" fill="none" stroke="#3a3a3a" stroke-width="2"/></svg>
<span style="left:2459.07px;top:662.82px;font-size:28px;line-height:35px;color:#4f4f4f;transform:scaleX(1.1259);-webkit-text-stroke:0.35px #fff;">Re-Run PII Detection</span>
<div style="left:1892px;top:274px;width:500px;height:144px;background:#fff;border-radius:16px;box-shadow:0 12px 32px rgba(0,0,0,.12),0 6px 14px rgba(0,0,0,.12),0 18px 56px 16px rgba(0,0,0,.05);"></div>
<span style="left:1924.80px;top:296.82px;font-size:28px;line-height:35px;color:#4f4f4f;transform:scaleX(1.1002);-webkit-text-stroke:0.4px #fff;">Add to Review Phase</span>
<div style="left:1900px;top:345.5px;width:484.5px;height:64px;background:#f5f5f5;border-radius:8px;"></div>
<span style="left:1922.59px;top:361.32px;font-size:28px;line-height:35px;color:#4f4f4f;transform:scaleX(1.1047);-webkit-text-stroke:0.4px #f5f5f5;">Remove From Review Phase</span>
<svg style="left:0;top:0;pointer-events:none" width="2932" height="1422" viewBox="0 0 2932 1422"><text x="976.2" y="162.8" font-family="Liberation Serif" font-weight="700" font-size="63" style="" fill="#fff" stroke="#fff" stroke-width="14" stroke-linejoin="round">1</text><text x="976.2" y="162.8" font-family="Liberation Serif" font-weight="700" font-size="63" style="" fill="#4a9bec">1</text></svg>
<svg style="left:0;top:0;pointer-events:none" width="2932" height="1422" viewBox="0 0 2932 1422"><text x="1820.2" y="403.2" font-family="Liberation Serif" font-weight="700" font-size="63" style="font-style:italic;" fill="#fff" stroke="#fff" stroke-width="14" stroke-linejoin="round">5</text><text x="1820.2" y="403.2" font-family="Liberation Serif" font-weight="700" font-size="63" style="font-style:italic;" fill="#4a9bec" stroke="#4a9bec" stroke-width="1.6" stroke-linejoin="round">5</text></svg>
<svg style="left:0;top:0;pointer-events:none" width="2932" height="1422" viewBox="0 0 2932 1422"><text x="2883.6" y="166.3" font-family="Liberation Sans" font-weight="700" font-size="58.5" style="" fill="#fff" stroke="#fff" stroke-width="14" stroke-linejoin="round">4</text><text x="2883.6" y="166.3" font-family="Liberation Sans" font-weight="700" font-size="58.5" style="" fill="#4a9bec" stroke="#4a9bec" stroke-width="1.1" stroke-linejoin="round">4</text></svg>
</body></html>
